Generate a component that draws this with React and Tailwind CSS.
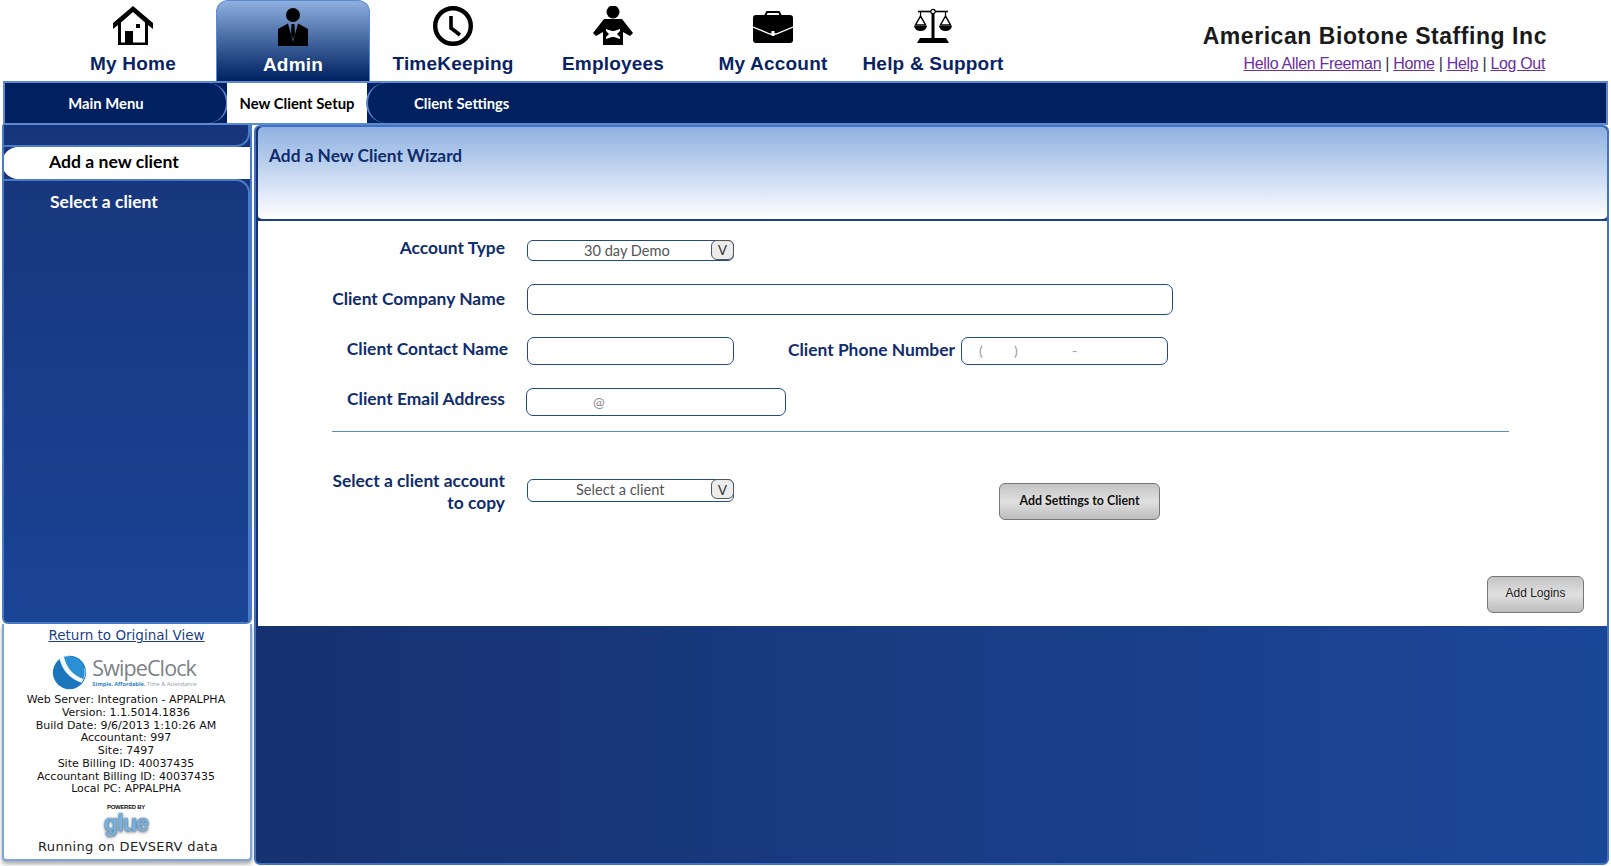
const SANS = "font-['Lato','Open_Sans',sans-serif]"

function HomeIcon() {
  return (
    <svg viewBox="0 0 40 39" className="w-[40px] h-[39px]">
      <path d="M20 0 L40 17 V23 L35 19 V39 H5 V19 L0 23 V17 Z" fill="#000" />
      <path d="M20 6 L32 16.5 V36.5 H8 V16.5 Z" fill="#fff" />
      <rect x="12" y="25" width="8" height="13" fill="#000" />
      <rect x="23" y="18" width="4" height="4" fill="#000" />
    </svg>
  )
}

function AdminIcon() {
  return (
    <svg viewBox="0 0 30 38" className="w-[30px] h-[38px]">
      <circle cx="15" cy="7" r="7" fill="#000" />
      <path d="M0 38 V21 L10 15.5 L15 34 L20 15.5 L30 21 V38 Z" fill="#000" />
      <path d="M13.5 16 H16.5 L17 27 L15 31 L13 27 Z" fill="#000" />
    </svg>
  )
}

function ClockIcon() {
  return (
    <svg viewBox="0 0 40 40" className="w-[40px] h-[40px]">
      <circle cx="20" cy="20" r="17.8" fill="none" stroke="#000" strokeWidth="4.4" />
      <path d="M18 10 V22 L27 29" fill="none" stroke="#000" strokeWidth="3.6" />
    </svg>
  )
}

function EmployeeIcon() {
  return (
    <svg viewBox="0 0 40 39" className="w-[40px] h-[39px]">
      <circle cx="20" cy="6" r="6.5" fill="#000" />
      <path d="M11 13 H29 L40 27 L37 30 L30 26 V39 H10 V26 L3 30 L0 27 Z" fill="#000" />
      <path d="M13 23 L19 25 H21 L27 23 V25 L24 28 L27 31 V33 L21 31 H19 L13 33 V31 L16 28 L13 25 Z" fill="#fff" />
    </svg>
  )
}

function BriefcaseIcon() {
  return (
    <svg viewBox="0 0 40 32" className="w-[40px] h-[32px] mt-[3px]">
      <path d="M12 5 L14 1 H26 L28 5" fill="none" stroke="#000" strokeWidth="2" />
      <rect x="0" y="4" width="40" height="28" rx="3" fill="#000" />
      <path d="M0 16 L17 23 H23 L40 16" fill="none" stroke="#fff" strokeWidth="1.3" />
      <rect x="18.5" y="20" width="3" height="5" fill="#fff" />
    </svg>
  )
}

function ScalesIcon() {
  return (
    <svg viewBox="0 0 38 35" className="w-[38px] h-[35px]">
      <path d="M4 3.5 H34" stroke="#000" strokeWidth="1.6" />
      <path d="M19 5 V31" stroke="#000" strokeWidth="3" />
      <circle cx="19" cy="3.5" r="2.2" fill="#fff" stroke="#000" strokeWidth="1.2" />
      <path d="M6.5 4 V8 M31.5 4 V8" stroke="#000" strokeWidth="1.2" />
      <path d="M6.5 8 L1.5 17 H11.5 Z M31.5 8 L26.5 17 H36.5 Z" fill="none" stroke="#000" strokeWidth="1.5" />
      <path d="M0 18 H13 Q12 23 6.5 23 Q1 23 0 18 Z M25 18 H38 Q37 23 31.5 23 Q26 23 25 18 Z" fill="#000" />
      <path d="M3 35 L6 30 H32 L35 35 Z" fill="#000" />
    </svg>
  )
}

function SwipeClockLogo() {
  return (
    <div className="flex items-center justify-center gap-[4px] h-[40px] pr-[4px]">
      <svg viewBox="0 0 40 40" className="w-[37px] h-[37px] shrink-0">
        <circle cx="20" cy="20" r="18" fill="#1b75bb" />
        <path d="M9 4 Q13 24 33 31 Q38 24 37 17 Q30 5 17 2 Z" fill="#fff" opacity="0.95" />
        <path d="M14 3 Q18 21 35 27 Q39 16 32 8 Q24 1 14 3 Z" fill="#2a8fd4" />
      </svg>
      <div className="flex flex-col items-start">
        <span className="font-['Open_Sans',sans-serif] text-[21.5px] leading-[24px] tracking-[-0.9px] text-[#7b8288]">SwipeClock</span>
        <span className="font-['Open_Sans',sans-serif] text-[5.6px] leading-[8px] whitespace-nowrap text-[#8a9aaa]">
          <span className="text-[#2f7fc4] font-bold">Simple. Affordable.</span> Time &amp; Attendance
        </span>
      </div>
    </div>
  )
}

const navItems = [
  { label: 'My Home', icon: HomeIcon },
  { label: 'Admin', icon: AdminIcon, active: true },
  { label: 'TimeKeeping', icon: ClockIcon },
  { label: 'Employees', icon: EmployeeIcon },
  { label: 'My Account', icon: BriefcaseIcon },
  { label: 'Help & Support', icon: ScalesIcon }
]

const buildInfo = [
  'Web Server: Integration - APPALPHA',
  'Version: 1.1.5014.1836',
  'Build Date: 9/6/2013 1:10:26 AM',
  'Accountant: 997',
  'Site: 7497',
  'Site Billing ID: 40037435',
  'Accountant Billing ID: 40037435',
  'Local PC: APPALPHA'
]

function SelectBox({ text, textClass, boxClass }) {
  return (
    <div className={`relative w-[207px] border border-[#1f4a86] rounded-[6px] bg-white ${boxClass}`}>
      <span className={`absolute top-0 text-[14.6px] leading-[20px] text-[#555] ${textClass}`}>{text}</span>
      <span className="absolute right-[-1px] top-[-1px] w-[23px] h-[20px] border border-[#555] rounded-[6px] bg-[#ececec] flex items-center justify-center font-['Open_Sans',sans-serif] text-[15px] leading-none text-[#333]">V</span>
    </div>
  )
}

const labelClass = 'text-[17.4px] leading-[18px] font-bold text-[#0f2d6b] text-right whitespace-nowrap'
const inputClass = 'border border-[#1f4a86] rounded-[7px] bg-white'

export default function App() {
  return (
    <div className={`w-[1611px] h-[866px] bg-white overflow-hidden ${SANS}`}>
      {/* Top nav */}
      <div className="flex h-[81px] pl-[53px] font-['Liberation_Sans',sans-serif]">
        {navItems.map((item) => (
          <div key={item.label} className="w-[160px] px-[3px]">
            <div
              className={`h-[81px] flex flex-col items-center ${
                item.active
                  ? 'rounded-t-[12px] border border-b-0 border-[#5b8ad0] bg-gradient-to-b from-[#8fb0e0] to-[#002060] text-white'
                  : 'text-[#0a2463]'
              }`}
            >
              <div className="h-[50px] flex items-center justify-center pt-[1px]">
                <item.icon />
              </div>
              <div className="text-[19px] leading-[28px] font-bold tracking-[0.2px] whitespace-nowrap">{item.label}</div>
            </div>
          </div>
        ))}
        <div className="ml-auto pr-[64px] flex flex-col items-end pt-[21px]">
          <div className="text-[23px] leading-[30px] font-bold tracking-[0.55px] text-[#1a1a1a]">American Biotone Staffing Inc</div>
          <div className="text-[16px] leading-[20px] pr-[2px] mt-[3px] tracking-[-0.33px] text-[#333]">
            <a className="underline text-[#6b2fa0]">Hello Allen Freeman</a> | <a className="underline text-[#6b2fa0]">Home</a> | <a className="underline text-[#6b2fa0]">Help</a> | <a className="underline text-[#6b2fa0]">Log Out</a>
          </div>
        </div>
      </div>

      {/* Sub nav */}
      <div className="ml-[3px] w-[1605px] h-[44px] border-2 border-[#5b8ad0] bg-[#002060] flex text-[14.8px] font-bold">
        <div className="w-[223px] flex items-center justify-center pr-[19px] text-white rounded-r-[20px] border-r-2 border-[#5b8ad0]">Main Menu</div>
        <div className="w-[140px] bg-white flex items-center justify-center text-black -ml-[1px]">New Client Setup</div>
        <div className="flex-1 flex items-center pl-[46px] text-white rounded-l-[20px] border-l-2 border-[#5b8ad0] -ml-[1px] bg-[#002060]">Client Settings</div>
      </div>

      <div className="flex h-[741px] pl-[2px]">
        {/* Sidebar */}
        <div className="w-[250px] h-[736px] flex flex-col">
          <div className="flex-1 flex flex-col rounded-b-[6px] border-2 border-t-0 border-[#4a7cc8] bg-gradient-to-b from-[#17357a] to-[#1a4496] overflow-hidden">
            <div className="h-[22px] rounded-br-[14px] border-b-2 border-r-2 border-[#4a7cc8]" />
            <div className="h-[32px] -ml-[2px] bg-white rounded-l-[16px] flex items-center pl-[47px] pb-[2px] text-[17.6px] font-bold text-black">Add a new client</div>
            <div className="flex-1 rounded-tr-[14px] border-t-2 border-r-2 border-[#4a7cc8] pl-[46px] pt-[9px] text-[17.5px] font-bold leading-[24px] text-white">Select a client</div>
          </div>
          <div className="h-[237px] shrink-0 border-2 border-t-0 border-[#7fa3dc] rounded-b-[4px] shadow-[0_3px_4px_rgba(0,0,0,0.35)] bg-white flex flex-col items-center font-['DejaVu_Sans',sans-serif] text-[#111] pr-[2px]">
            <div className="text-[13.5px] leading-[18px] mt-[2px] ml-[1px] underline text-[#1d3f8b]">Return to Original View</div>
            <div className="mt-[8px]"><SwipeClockLogo /></div>
            <div className="mt-[2px] text-[11px] leading-[12.75px] text-center whitespace-nowrap">
              {buildInfo.map((line) => (
                <div key={line}>{line}</div>
              ))}
            </div>
            <div className="mt-[8px] text-[6px] leading-[7px] font-bold tracking-[-0.3px] font-['Liberation_Sans',sans-serif]">POWERED BY</div>
            <div className="text-[24px] leading-[24px] font-bold text-[#7db0d8] tracking-[-1.2px] font-['Liberation_Sans',sans-serif] [text-shadow:0_0_2px_#1b4f8a,0_2px_3px_rgba(0,0,0,0.4)]">glue</div>
            <div className="mt-[3px] ml-[4px] text-[13px] leading-[18px] tracking-[0.35px] text-[#222]">Running on DEVSERV data</div>
          </div>
        </div>

        {/* Main */}
        <div className="ml-[2px] w-[1355px] h-[740px] border-2 border-[#3f74c4] rounded-[6px] bg-gradient-to-r from-[#16316f] to-[#1b4799] overflow-hidden">
          <div className="ml-[2px] h-[94px] bg-gradient-to-b from-[#8fb1e1] to-white border-b-2 border-[#1a4288] rounded-[5px] pl-[11px] pt-[16px] text-[17.3px] leading-[26px] font-bold text-[#0f2d6b]">
            Add a New Client Wizard
          </div>
          <div className="ml-[2px] h-[405px] bg-white overflow-hidden">
            {/* Row 1 */}
            <div className="flex items-center mt-[18px]">
              <div className={`w-[247px] mb-[4px] ${labelClass}`}>Account Type</div>
              <div className="ml-[22px]">
                <SelectBox text="30 day Demo" textClass="left-[56px]" boxClass="h-[21px]" />
              </div>
            </div>
            {/* Row 2 */}
            <div className="flex items-center mt-[23px]">
              <div className={`w-[247px] mb-[1px] ${labelClass}`}>Client Company Name</div>
              <div className={`ml-[22px] w-[646px] h-[31px] ${inputClass}`} />
            </div>
            {/* Row 3 */}
            <div className="flex items-center mt-[22px]">
              <div className={`w-[250px] mb-[4px] ${labelClass}`}>Client Contact Name</div>
              <div className={`ml-[19px] w-[207px] h-[28px] ${inputClass}`} />
              <div className={`w-[221px] mb-[2px] ${labelClass}`}>Client Phone Number</div>
              <div className={`ml-[6px] w-[207px] h-[28px] relative ${inputClass}`}>
                <span className="absolute left-[17px] top-[3px] text-[14px] leading-[20px] text-[#999]">(</span>
                <span className="absolute left-[52px] top-[3px] text-[14px] leading-[20px] text-[#999]">)</span>
                <span className="absolute left-[110px] top-[3px] text-[14px] leading-[20px] text-[#999]">-</span>
              </div>
            </div>
            {/* Row 4 */}
            <div className="flex items-center mt-[23px]">
              <div className={`w-[247px] mb-[6px] ${labelClass}`}>Client Email Address</div>
              <div className={`ml-[21px] w-[260px] h-[28px] relative ${inputClass}`}>
                <span className="absolute left-[66px] top-[3px] text-[14px] leading-[20px] text-[#888]">@</span>
              </div>
            </div>
            <div className="ml-[74px] w-[1177px] h-px bg-[#5b8ac4] mt-[15px]" />
            {/* Row 5 */}
            <div className="flex items-start mt-[38px]">
              <div className={`w-[247px] !leading-[22px] ${labelClass}`}>
                Select a client account
                <br />
                to copy
              </div>
              <div className="ml-[22px] mt-[9px]">
                <SelectBox text="Select a client" textClass="left-[48px]" boxClass="h-[23px]" />
              </div>
              <button className="ml-[265px] mt-[13px] w-[161px] h-[37px] rounded-[6px] border border-[#777] bg-gradient-to-b from-[#c4c4c4] via-[#e0e0e0] to-[#bdbdbd] text-[12.4px] font-bold text-[#111]">
                Add Settings to Client
              </button>
            </div>
            {/* Add Logins */}
            <div className="flex justify-end pr-[23px] mt-[56px]">
              <button className="w-[97px] h-[37px] pb-[3px] rounded-[6px] border border-[#777] bg-gradient-to-b from-[#c4c4c4] via-[#e0e0e0] to-[#bdbdbd] font-['Liberation_Sans',sans-serif] text-[12px] text-[#222]">
                Add Logins
              </button>
            </div>
          </div>
        </div>
      </div>
    </div>
  )
}
